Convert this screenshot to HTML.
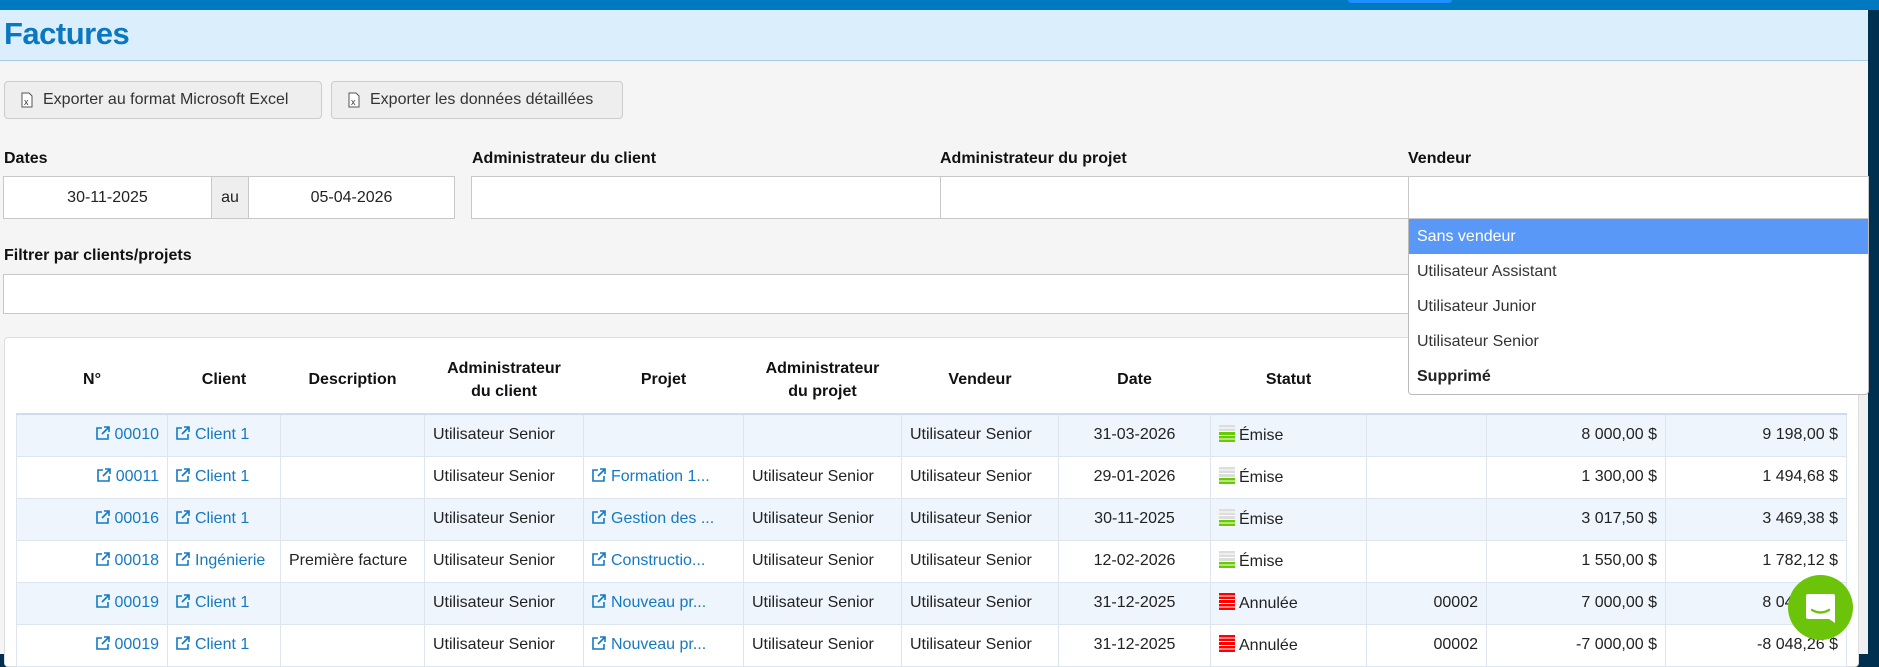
<!DOCTYPE html>
<html><head><meta charset="utf-8"><style>
*{box-sizing:border-box;margin:0;padding:0}
body{width:1879px;height:654px;overflow:hidden;background:#003050;font-family:"Liberation Sans",sans-serif;font-size:16px;color:#222;position:relative}
.abs{position:absolute}
#top{left:0;top:0;width:1879px;height:10px;background:#0079c1}
#tab{left:1348px;top:0;width:104px;height:3px;background:#1e90ff;border-radius:0 0 3px 3px}
#page{left:0;top:10px;width:1868px;height:644px;background:#f5f5f5}
#hdr{left:0;top:10px;width:1868px;height:51px;background:#dbeefc;border-bottom:1px solid #a9cbe6;border-top-right-radius:4px}
#hdr h1{position:absolute;left:4px;top:6px;font-size:31px;font-weight:bold;color:#0a78c0;letter-spacing:-0.5px}
.btn{position:absolute;top:81px;height:38px;background:#eee;border:1px solid #ccc;border-radius:4px;font-size:16px;color:#333;line-height:36px;padding-left:38px}
.btn svg{position:absolute;left:16px;top:10px}
.lbl{position:absolute;font-weight:bold;font-size:16px;color:#111}
.inp{position:absolute;background:#fff;border:1px solid #c8c8c8;height:43px;text-align:center;line-height:41px;font-size:16px}
#dd{left:1408px;top:219px;width:461px;height:176px;background:#fff;border:1px solid #bbb;border-top:none;border-radius:0 0 4px 4px;z-index:5}
#dd div{height:35px;line-height:35px;padding-left:8px;font-size:16px;color:#333}
#dd .sel{background:#5a98f8;color:#fff}
#panel{left:4px;top:337px;width:1855px;height:330px;background:#fff;border:1px solid #ddd;border-radius:4px}
#strip{left:1859px;top:337px;width:9px;height:317px;background:#f0f0f0}
table{position:absolute;left:16px;top:346px;border-collapse:collapse;table-layout:fixed;width:1830px}
th{height:68px;font-weight:bold;font-size:16px;text-align:center;color:#111;line-height:23px;border-bottom:2px solid #cfdcf0}
td{height:42px;border:1px solid #dde5ef;font-size:16px;padding:0 8px;white-space:nowrap;overflow:hidden}
tr.o td{background:#eef5fd}
tr.e td{background:#fff}
td.r{text-align:right}td.c{text-align:center}
a{color:#1579c2;text-decoration:none}
.ext{display:inline-block;width:14px;height:14px;vertical-align:-1px;margin-right:5px}
.st{display:inline-block;width:16px;height:18px;vertical-align:-3px;margin-right:4px}
.g3{background:repeating-linear-gradient(transparent 0 2.6px,#fff 2.6px 3.6px),linear-gradient(#ddd 0 40%,#6c0 40%)}
.g2{background:repeating-linear-gradient(transparent 0 2.6px,#fff 2.6px 3.6px),linear-gradient(#ddd 0 60%,#6c0 60%)}
.rd{background:repeating-linear-gradient(transparent 0 2.6px,#fff 2.6px 3.6px),linear-gradient(#f00,#f00)}
#bub{left:1788px;top:575px;width:65px;height:65px;border-radius:50%;background:#6cc40a;z-index:6}
</style></head><body>
<div class="abs" id="top"></div><div class="abs" id="tab"></div>
<div class="abs" id="page"></div>
<div class="abs" id="hdr"><h1>Factures</h1></div>
<div class="btn" style="left:4px;width:318px"><svg width="12" height="16" viewBox="0 0 12 16"><path d="M1 1h7l3 3v11H1z" fill="#fff" stroke="#555"/><text x="3" y="13" font-size="9" fill="#333" font-family="Liberation Sans">x</text></svg>Exporter au format Microsoft Excel</div>
<div class="btn" style="left:331px;width:292px"><svg width="12" height="16" viewBox="0 0 12 16"><path d="M1 1h7l3 3v11H1z" fill="#fff" stroke="#555"/><text x="3" y="13" font-size="9" fill="#333" font-family="Liberation Sans">x</text></svg>Exporter les données détaillées</div>
<div class="lbl" style="left:4px;top:150px">Dates</div>
<div class="lbl" style="left:472px;top:150px">Administrateur du client</div>
<div class="lbl" style="left:940px;top:150px">Administrateur du projet</div>
<div class="lbl" style="left:1408px;top:150px">Vendeur</div>
<div class="inp" style="left:3px;top:176px;width:209px">30-11-2025</div>
<div class="inp" style="left:211px;top:176px;width:38px;background:#eee">au</div>
<div class="inp" style="left:248px;top:176px;width:207px">05-04-2026</div>
<div class="inp" style="left:471px;top:176px;width:470px"></div>
<div class="inp" style="left:940px;top:176px;width:469px"></div>
<div class="inp" style="left:1408px;top:176px;width:461px"></div>
<div class="lbl" style="left:4px;top:247px">Filtrer par clients/projets</div>
<div class="inp" style="left:3px;top:274px;width:1866px;height:40px"></div>
<div class="abs" id="panel"></div>
<div class="abs" id="strip"></div>
<table>
<colgroup><col style="width:151px"><col style="width:113px"><col style="width:144px"><col style="width:159px"><col style="width:160px"><col style="width:158px"><col style="width:157px"><col style="width:152px"><col style="width:156px"><col style="width:120px"><col style="width:179px"><col style="width:181px"></colgroup>
<tr><th>N°</th><th>Client</th><th>Description</th><th>Administrateur<br>du client</th><th>Projet</th><th>Administrateur<br>du projet</th><th>Vendeur</th><th>Date</th><th>Statut</th><th>N°</th><th></th><th></th></tr>
<tr class="o"><td class="r"><a><svg class="ext" viewBox="0 0 14 14"><path d="M6 2H1v11h11V8M8 1h5v5M13 1L6 8" fill="none" stroke="#1579c2" stroke-width="1.6"/></svg>00010</a></td><td><a><svg class="ext" viewBox="0 0 14 14"><path d="M6 2H1v11h11V8M8 1h5v5M13 1L6 8" fill="none" stroke="#1579c2" stroke-width="1.6"/></svg>Client 1</a></td><td></td><td>Utilisateur Senior</td><td></td><td></td><td>Utilisateur Senior</td><td class="c">31-03-2026</td><td><span class="st g3"></span>Émise</td><td></td><td class="r">8 000,00 $</td><td class="r">9 198,00 $</td></tr>
<tr class="e"><td class="r"><a><svg class="ext" viewBox="0 0 14 14"><path d="M6 2H1v11h11V8M8 1h5v5M13 1L6 8" fill="none" stroke="#1579c2" stroke-width="1.6"/></svg>00011</a></td><td><a><svg class="ext" viewBox="0 0 14 14"><path d="M6 2H1v11h11V8M8 1h5v5M13 1L6 8" fill="none" stroke="#1579c2" stroke-width="1.6"/></svg>Client 1</a></td><td></td><td>Utilisateur Senior</td><td><a><svg class="ext" viewBox="0 0 14 14"><path d="M6 2H1v11h11V8M8 1h5v5M13 1L6 8" fill="none" stroke="#1579c2" stroke-width="1.6"/></svg>Formation 1...</a></td><td>Utilisateur Senior</td><td>Utilisateur Senior</td><td class="c">29-01-2026</td><td><span class="st g2"></span>Émise</td><td></td><td class="r">1 300,00 $</td><td class="r">1 494,68 $</td></tr>
<tr class="o"><td class="r"><a><svg class="ext" viewBox="0 0 14 14"><path d="M6 2H1v11h11V8M8 1h5v5M13 1L6 8" fill="none" stroke="#1579c2" stroke-width="1.6"/></svg>00016</a></td><td><a><svg class="ext" viewBox="0 0 14 14"><path d="M6 2H1v11h11V8M8 1h5v5M13 1L6 8" fill="none" stroke="#1579c2" stroke-width="1.6"/></svg>Client 1</a></td><td></td><td>Utilisateur Senior</td><td><a><svg class="ext" viewBox="0 0 14 14"><path d="M6 2H1v11h11V8M8 1h5v5M13 1L6 8" fill="none" stroke="#1579c2" stroke-width="1.6"/></svg>Gestion des ...</a></td><td>Utilisateur Senior</td><td>Utilisateur Senior</td><td class="c">30-11-2025</td><td><span class="st g2"></span>Émise</td><td></td><td class="r">3 017,50 $</td><td class="r">3 469,38 $</td></tr>
<tr class="e"><td class="r"><a><svg class="ext" viewBox="0 0 14 14"><path d="M6 2H1v11h11V8M8 1h5v5M13 1L6 8" fill="none" stroke="#1579c2" stroke-width="1.6"/></svg>00018</a></td><td><a><svg class="ext" viewBox="0 0 14 14"><path d="M6 2H1v11h11V8M8 1h5v5M13 1L6 8" fill="none" stroke="#1579c2" stroke-width="1.6"/></svg>Ingénierie</a></td><td>Première facture</td><td>Utilisateur Senior</td><td><a><svg class="ext" viewBox="0 0 14 14"><path d="M6 2H1v11h11V8M8 1h5v5M13 1L6 8" fill="none" stroke="#1579c2" stroke-width="1.6"/></svg>Constructio...</a></td><td>Utilisateur Senior</td><td>Utilisateur Senior</td><td class="c">12-02-2026</td><td><span class="st g2"></span>Émise</td><td></td><td class="r">1 550,00 $</td><td class="r">1 782,12 $</td></tr>
<tr class="o"><td class="r"><a><svg class="ext" viewBox="0 0 14 14"><path d="M6 2H1v11h11V8M8 1h5v5M13 1L6 8" fill="none" stroke="#1579c2" stroke-width="1.6"/></svg>00019</a></td><td><a><svg class="ext" viewBox="0 0 14 14"><path d="M6 2H1v11h11V8M8 1h5v5M13 1L6 8" fill="none" stroke="#1579c2" stroke-width="1.6"/></svg>Client 1</a></td><td></td><td>Utilisateur Senior</td><td><a><svg class="ext" viewBox="0 0 14 14"><path d="M6 2H1v11h11V8M8 1h5v5M13 1L6 8" fill="none" stroke="#1579c2" stroke-width="1.6"/></svg>Nouveau pr...</a></td><td>Utilisateur Senior</td><td>Utilisateur Senior</td><td class="c">31-12-2025</td><td><span class="st rd"></span>Annulée</td><td class="r">00002</td><td class="r">7 000,00 $</td><td class="r">8 048,26 $</td></tr>
<tr class="e"><td class="r"><a><svg class="ext" viewBox="0 0 14 14"><path d="M6 2H1v11h11V8M8 1h5v5M13 1L6 8" fill="none" stroke="#1579c2" stroke-width="1.6"/></svg>00019</a></td><td><a><svg class="ext" viewBox="0 0 14 14"><path d="M6 2H1v11h11V8M8 1h5v5M13 1L6 8" fill="none" stroke="#1579c2" stroke-width="1.6"/></svg>Client 1</a></td><td></td><td>Utilisateur Senior</td><td><a><svg class="ext" viewBox="0 0 14 14"><path d="M6 2H1v11h11V8M8 1h5v5M13 1L6 8" fill="none" stroke="#1579c2" stroke-width="1.6"/></svg>Nouveau pr...</a></td><td>Utilisateur Senior</td><td>Utilisateur Senior</td><td class="c">31-12-2025</td><td><span class="st rd"></span>Annulée</td><td class="r">00002</td><td class="r">-7 000,00 $</td><td class="r">-8 048,26 $</td></tr>
</table>
<div class="abs" id="dd"><div class="sel">Sans vendeur</div><div>Utilisateur Assistant</div><div>Utilisateur Junior</div><div>Utilisateur Senior</div><div style="font-weight:bold;color:#222">Supprimé</div></div>
<div class="abs" id="bub"><svg width="65" height="65" viewBox="0 0 65 65"><path d="M20 19h25a2 2 0 0 1 2 2v27l-6-4H20a2 2 0 0 1-2-2V21a2 2 0 0 1 2-2z" fill="#fff"/><path d="M24 35q8.5 5 17 0" fill="none" stroke="#6cc40a" stroke-width="2.4" stroke-linecap="round"/></svg></div>
</body></html>
